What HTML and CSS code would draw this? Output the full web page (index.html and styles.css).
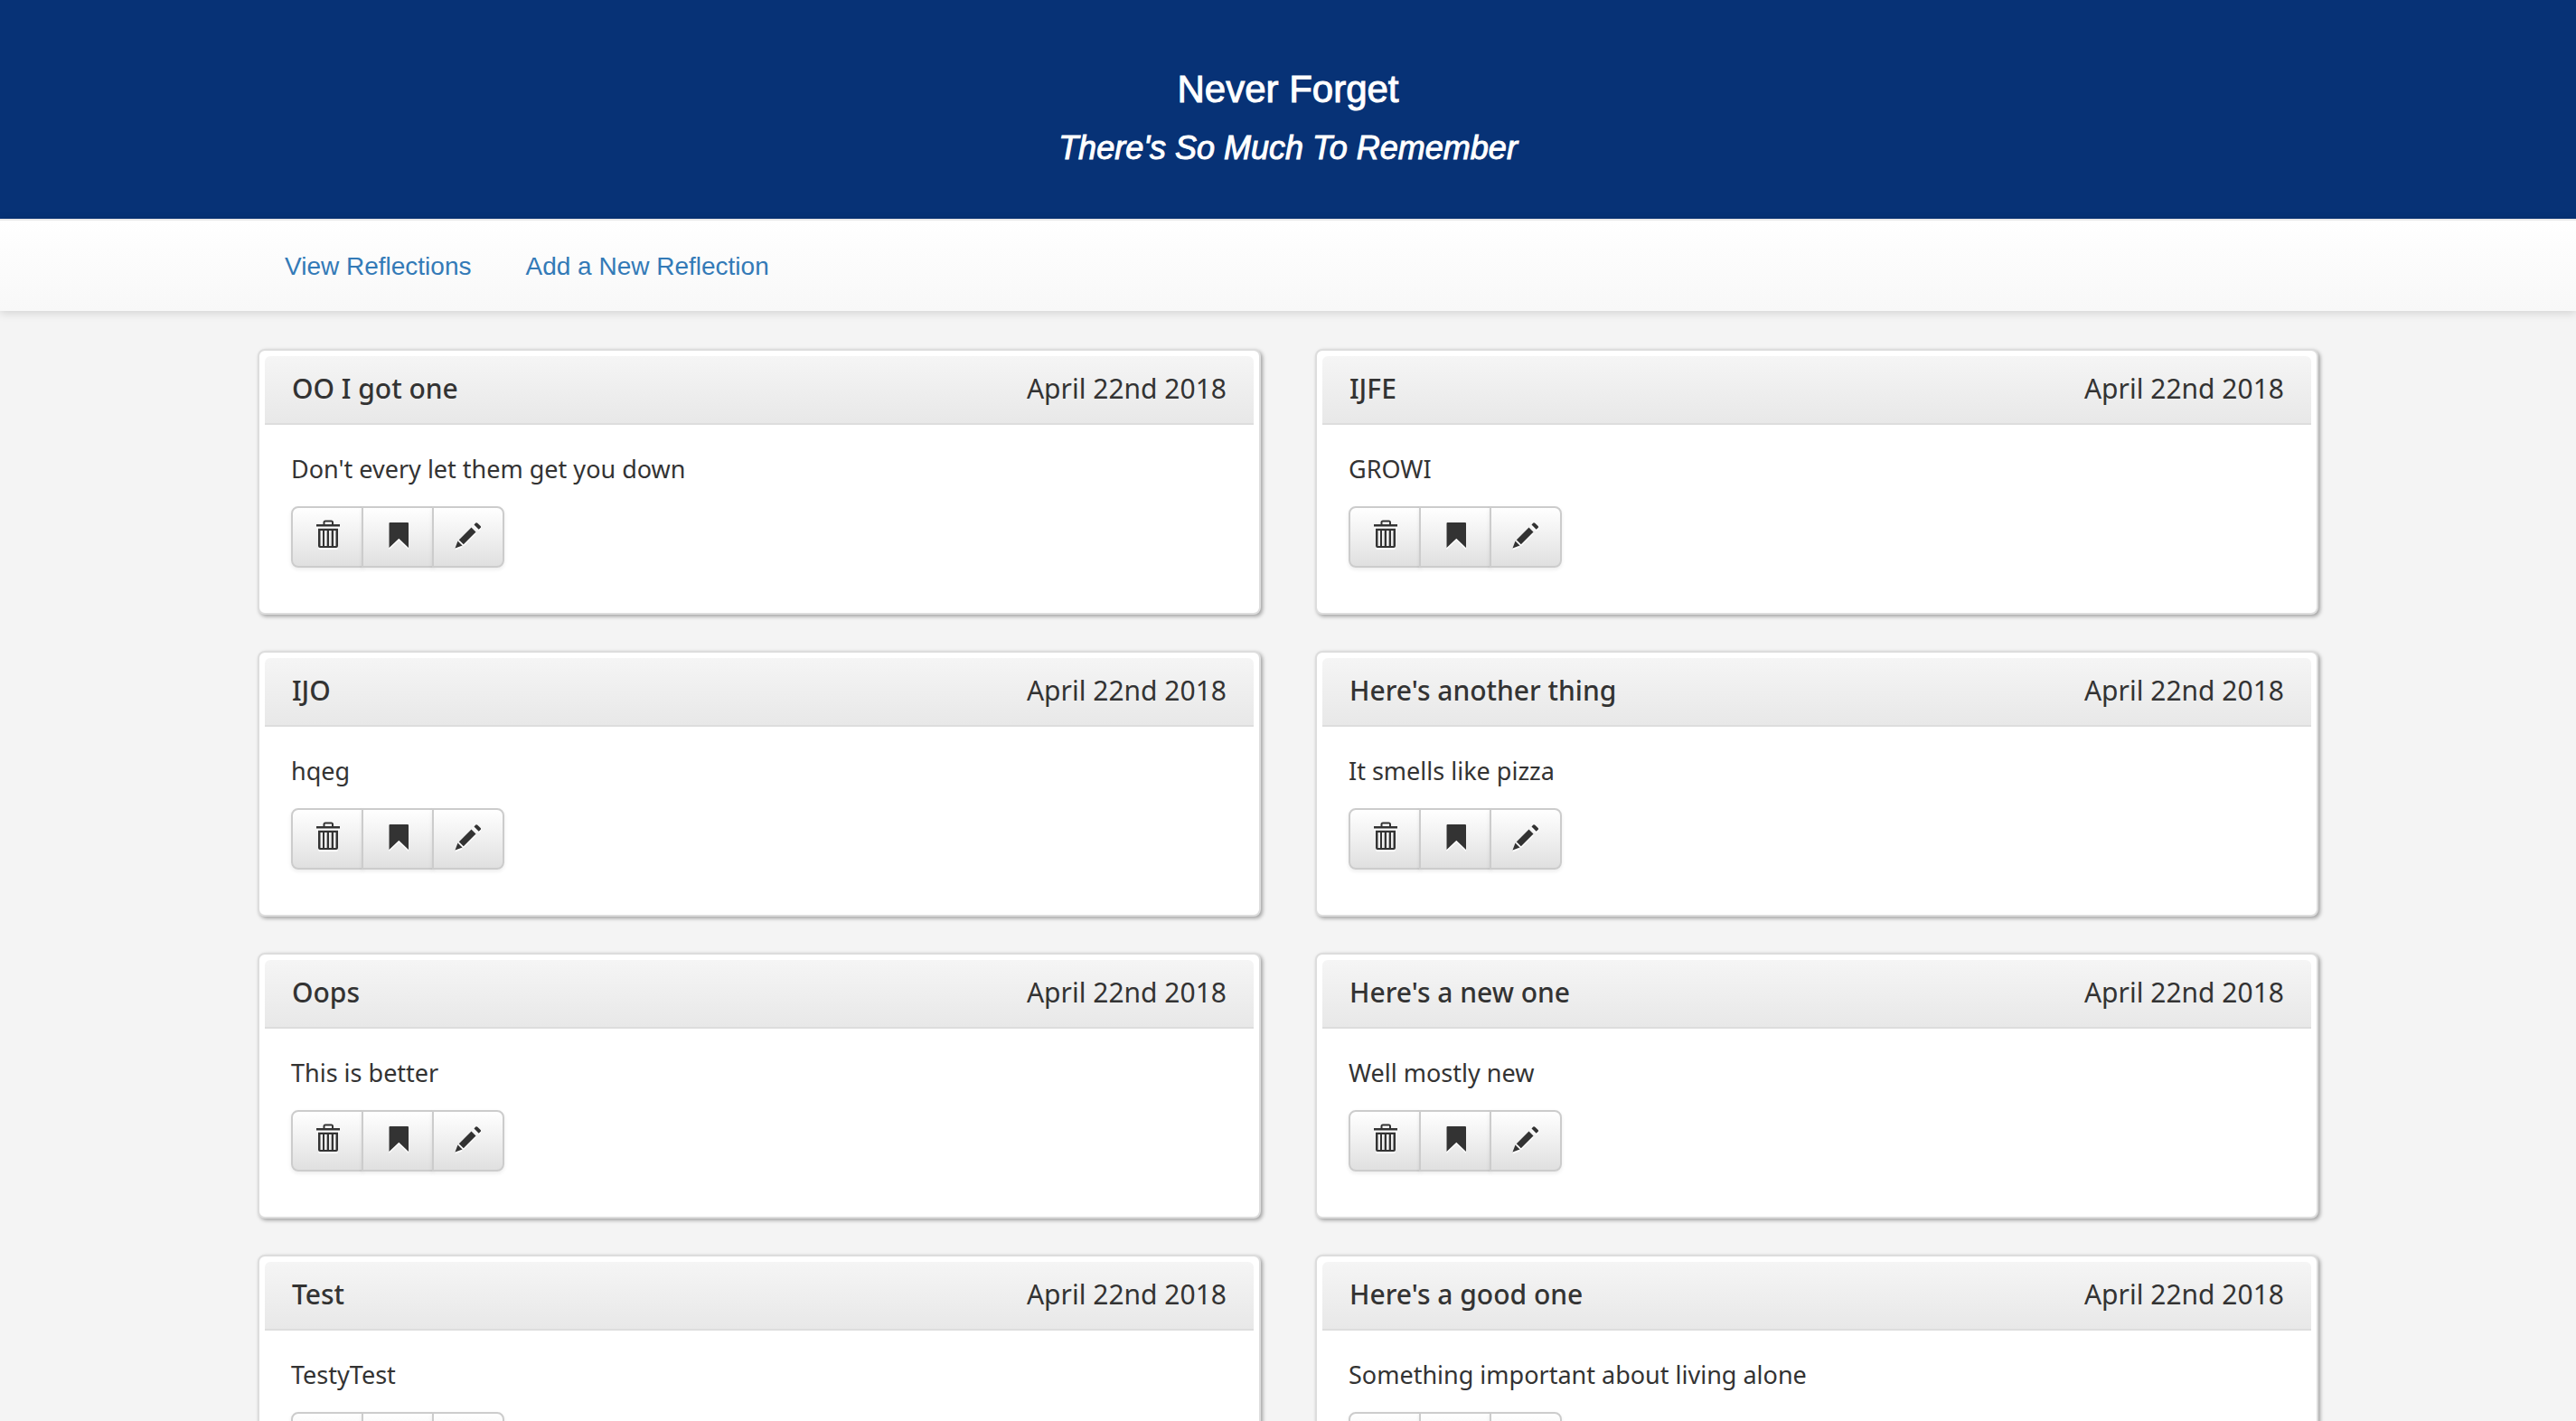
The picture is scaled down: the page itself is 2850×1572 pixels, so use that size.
FILE: index.html
```html
<!DOCTYPE html>
<html lang="en">
<head>
<meta charset="utf-8">
<title>Never Forget</title>
<link rel="stylesheet" href="styles.css">
</head>
<body>
<svg class="sprite" aria-hidden="true">
  <symbol id="i-trash" viewBox="0 0 32 32">
    <path fill-rule="evenodd" d="M4 5H11.500V3Q11.500 .5 14 .5H20.500Q23 .5 23 3V5H30V7.500H4ZM13.500 5H21V2.500H13.500Z"/>
    <path fill-rule="evenodd" d="M6 9.700H28V29Q28 31 26 31H8Q6 31 6 29ZM8.500 12V29H11V12ZM13 12V29H15.700V12ZM18 12V29H20.700V12ZM23 12V29H25.500V12Z"/>
  </symbol>
  <symbol id="i-bookmark" viewBox="0 0 32 32"><path d="M6.500 4Q6.500 3 7.500 3H27Q28 3 28 4V31L17.300 20.700L6.500 31Z"/></symbol>
  <symbol id="i-pencil" viewBox="0 0 32 32"><path d="M1.500 31.500L4.500 23.500L9.500 28.500ZM5.800 22.300L19.500 8.500L24.500 13.500L10.800 27.300ZM22.500 5.500L24.300 3.500Q25.300 2.700 26.300 3.700L29.700 7Q30.500 8 29.500 9L27.700 10.700Z"/></symbol>
</svg>
<header class="banner">
  <h1 class="banner-title">Never Forget</h1>
  <p class="banner-tagline">There's So Much To Remember</p>
</header>
<nav class="navbar">
  <div class="container nav-links">
    <a href="#">View Reflections</a>
    <a href="#">Add a New Reflection</a>
  </div>
</nav>
<main class="container cards">
  <article class="card">
    <header class="card-head"><h2 class="card-title">OO I got one</h2><time datetime="2018-04-22">April 22nd 2018</time></header>
    <div class="card-body">
      <p class="card-text">Don't every let them get you down</p>
      <div class="btn-group">
        <button class="btn" type="button" aria-label="Delete"><svg class="icon"><use href="#i-trash"/></svg></button>
        <button class="btn" type="button" aria-label="Bookmark"><svg class="icon"><use href="#i-bookmark"/></svg></button>
        <button class="btn" type="button" aria-label="Edit"><svg class="icon"><use href="#i-pencil"/></svg></button>
      </div>
    </div>
  </article>
  <article class="card">
    <header class="card-head"><h2 class="card-title">IJFE</h2><time datetime="2018-04-22">April 22nd 2018</time></header>
    <div class="card-body">
      <p class="card-text">GROWI</p>
      <div class="btn-group">
        <button class="btn" type="button" aria-label="Delete"><svg class="icon"><use href="#i-trash"/></svg></button>
        <button class="btn" type="button" aria-label="Bookmark"><svg class="icon"><use href="#i-bookmark"/></svg></button>
        <button class="btn" type="button" aria-label="Edit"><svg class="icon"><use href="#i-pencil"/></svg></button>
      </div>
    </div>
  </article>
  <article class="card">
    <header class="card-head"><h2 class="card-title">IJO</h2><time datetime="2018-04-22">April 22nd 2018</time></header>
    <div class="card-body">
      <p class="card-text">hqeg</p>
      <div class="btn-group">
        <button class="btn" type="button" aria-label="Delete"><svg class="icon"><use href="#i-trash"/></svg></button>
        <button class="btn" type="button" aria-label="Bookmark"><svg class="icon"><use href="#i-bookmark"/></svg></button>
        <button class="btn" type="button" aria-label="Edit"><svg class="icon"><use href="#i-pencil"/></svg></button>
      </div>
    </div>
  </article>
  <article class="card">
    <header class="card-head"><h2 class="card-title">Here's another thing</h2><time datetime="2018-04-22">April 22nd 2018</time></header>
    <div class="card-body">
      <p class="card-text">It smells like pizza</p>
      <div class="btn-group">
        <button class="btn" type="button" aria-label="Delete"><svg class="icon"><use href="#i-trash"/></svg></button>
        <button class="btn" type="button" aria-label="Bookmark"><svg class="icon"><use href="#i-bookmark"/></svg></button>
        <button class="btn" type="button" aria-label="Edit"><svg class="icon"><use href="#i-pencil"/></svg></button>
      </div>
    </div>
  </article>
  <article class="card">
    <header class="card-head"><h2 class="card-title">Oops</h2><time datetime="2018-04-22">April 22nd 2018</time></header>
    <div class="card-body">
      <p class="card-text">This is better</p>
      <div class="btn-group">
        <button class="btn" type="button" aria-label="Delete"><svg class="icon"><use href="#i-trash"/></svg></button>
        <button class="btn" type="button" aria-label="Bookmark"><svg class="icon"><use href="#i-bookmark"/></svg></button>
        <button class="btn" type="button" aria-label="Edit"><svg class="icon"><use href="#i-pencil"/></svg></button>
      </div>
    </div>
  </article>
  <article class="card">
    <header class="card-head"><h2 class="card-title">Here's a new one</h2><time datetime="2018-04-22">April 22nd 2018</time></header>
    <div class="card-body">
      <p class="card-text">Well mostly new</p>
      <div class="btn-group">
        <button class="btn" type="button" aria-label="Delete"><svg class="icon"><use href="#i-trash"/></svg></button>
        <button class="btn" type="button" aria-label="Bookmark"><svg class="icon"><use href="#i-bookmark"/></svg></button>
        <button class="btn" type="button" aria-label="Edit"><svg class="icon"><use href="#i-pencil"/></svg></button>
      </div>
    </div>
  </article>
  <article class="card">
    <header class="card-head"><h2 class="card-title">Test</h2><time datetime="2018-04-22">April 22nd 2018</time></header>
    <div class="card-body">
      <p class="card-text">TestyTest</p>
      <div class="btn-group">
        <button class="btn" type="button" aria-label="Delete"><svg class="icon"><use href="#i-trash"/></svg></button>
        <button class="btn" type="button" aria-label="Bookmark"><svg class="icon"><use href="#i-bookmark"/></svg></button>
        <button class="btn" type="button" aria-label="Edit"><svg class="icon"><use href="#i-pencil"/></svg></button>
      </div>
    </div>
  </article>
  <article class="card">
    <header class="card-head"><h2 class="card-title">Here's a good one</h2><time datetime="2018-04-22">April 22nd 2018</time></header>
    <div class="card-body">
      <p class="card-text">Something important about living alone</p>
      <div class="btn-group">
        <button class="btn" type="button" aria-label="Delete"><svg class="icon"><use href="#i-trash"/></svg></button>
        <button class="btn" type="button" aria-label="Bookmark"><svg class="icon"><use href="#i-bookmark"/></svg></button>
        <button class="btn" type="button" aria-label="Edit"><svg class="icon"><use href="#i-pencil"/></svg></button>
      </div>
    </div>
  </article>
</main>
</body>
</html>
```
FILE: styles.css
```css
* { box-sizing: border-box; }
html { scrollbar-width: none; }
body {
  margin: 0;
  background: #f4f4f4;
  color: #333;
  font-family: "Noto Sans", sans-serif;
  font-size: 27px;
}
h1, h2, p { margin: 0; font-weight: 400; }
.sprite { display: none; }
.container { width: 80%; margin: 0 auto; }

.banner {
  padding: 72px 0 54px;
  background: #073276;
  color: #fff;
  text-align: center;
  font-family: "Liberation Sans", Arial, sans-serif;
  -webkit-text-stroke: 1px;
}
.banner-title { font-size: 42px; line-height: 54px; }
.banner-tagline {
  margin-top: 14px;
  font-size: 36px;
  line-height: 48px;
  font-style: italic;
}

.navbar {
  border-top: 2px solid #e7e7e7;
  background: linear-gradient(#fff, #f8f8f8);
  box-shadow: 0 2px 10px rgba(0, 0, 0, .15);
}
.nav-links {
  display: flex;
  gap: 60px;
  padding: 31px 30px 29px;
  font-family: "Liberation Sans", Arial, sans-serif;
  font-size: 28px;
  line-height: 40px;
}
.nav-links a { color: #337ab7; text-decoration: none; }

.cards {
  display: grid;
  grid-template-columns: 1fr 1fr;
  gap: 40px 60px;
  padding: 42px 0;
}
.card {
  padding: 6px;
  border: 2px solid #ddd;
  border-radius: 8px;
  background: #fff;
  box-shadow: 2px 2px 4px rgba(0, 0, 0, .35);
}
.card-head {
  display: flex;
  justify-content: space-between;
  padding: 16px 30px 18px;
  border-bottom: 2px solid #ddd;
  border-radius: 6px 6px 0 0;
  background: linear-gradient(#f5f5f5, #e8e8e8);
  font-size: 30px;
  line-height: 40px;
}
.card-title { font-size: 30px; font-weight: 500; }
.card-body { padding: 29px 29px 44px; }
.card-text { line-height: 40px; }

.btn-group { display: flex; margin-top: 21px; }
.btn {
  width: 80px;
  height: 68px;
  padding: 13px 22px 19px;
  border: 2px solid #ccc;
  background: linear-gradient(#fff, #e0e0e0);
  box-shadow: 0 2px 4px rgba(0, 0, 0, .08);
  color: #333;
}
.btn + .btn { margin-left: -2px; }
.btn:first-child { border-radius: 8px 0 0 8px; }
.btn:last-child { border-radius: 0 8px 8px 0; }
.icon {
  display: block;
  width: 32px;
  height: 32px;
  fill: currentColor;
  filter: drop-shadow(0 2px 0 #fff);
}
```
